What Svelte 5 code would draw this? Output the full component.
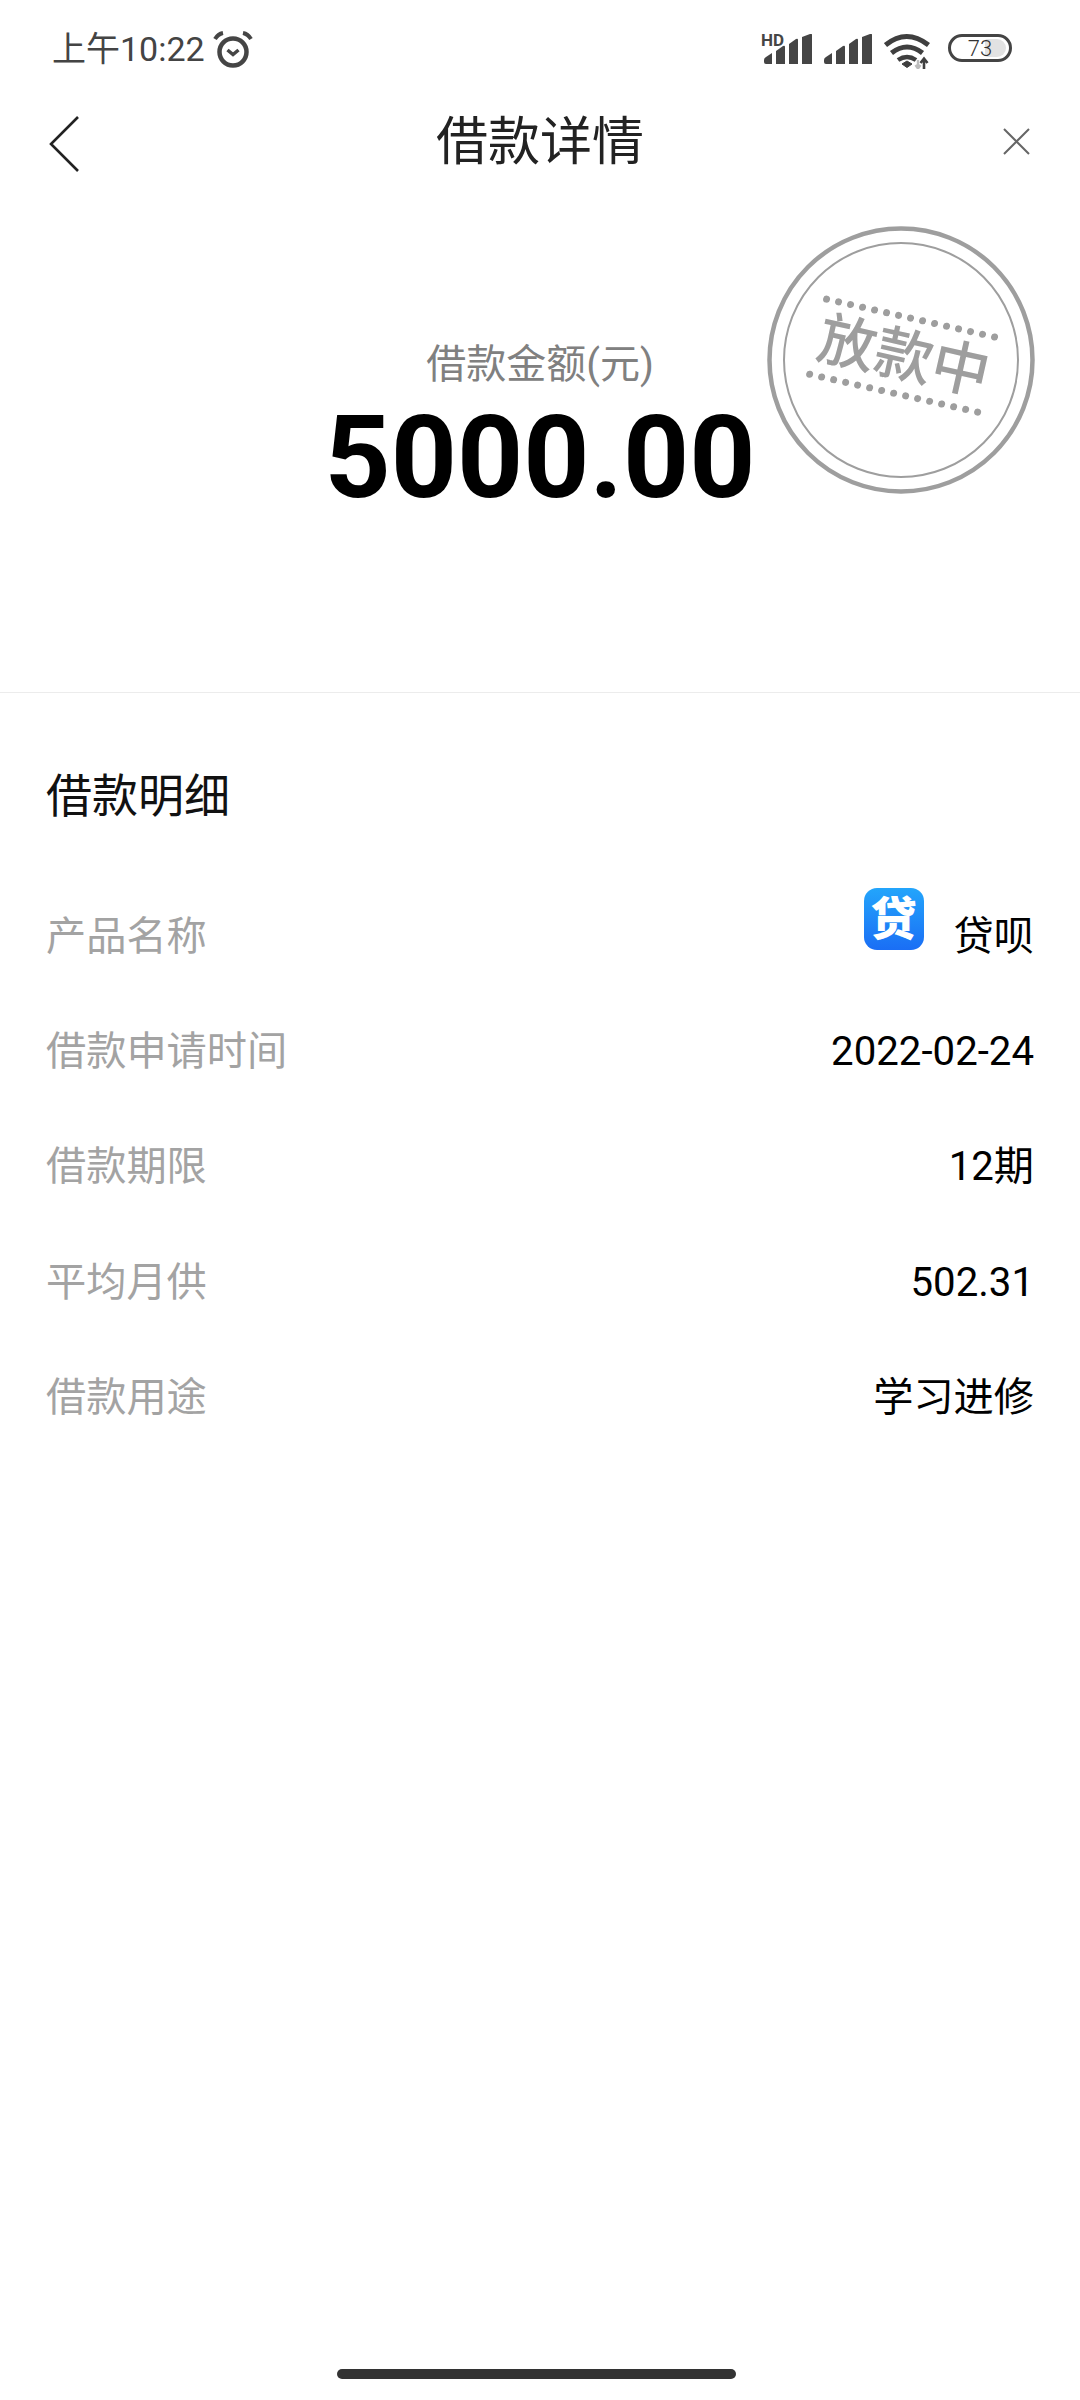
<script>
  const rows = [
    { label: '产品名称', value: '贷呗', logo: true },
    { label: '借款申请时间', value: '2022-02-24' },
    { label: '借款期限', value: '12期' },
    { label: '平均月供', value: '502.31' },
    { label: '借款用途', value: '学习进修' }
  ];
  const bars = [
    'M0 26q0-2 2-3l6-4v11H2q-2 0-2-2z',
    'M12 17l7-5q2-1 2 1v17h-9z',
    'M25 10l7-5q2-1 2 1v24h-9z',
    'M38 3l8-3q2-1 2 1v29h-10z'
  ];
</script>

<div class="page">
  <header class="status">
    <div class="time">
      <span>上午10:22</span>
      <svg width="40" height="38" viewBox="0 0 40 38" fill="none" stroke="#454545">
        <circle cx="20" cy="22" r="13.5" stroke-width="4.5" />
        <path d="M14.5 20l5.5 4.5 5.5-4.5" stroke-width="3.5" />
        <path d="M2 9q3-5 8-6M38 9q-3-5-8-6" stroke-width="4" />
      </svg>
    </div>
    <div class="icons">
      <div class="signal hd">
        <span>HD</span>
        <svg width="48" height="30" viewBox="0 0 48 30" fill="#454545">
          {#each bars as d}<path {d} />{/each}
        </svg>
      </div>
      <svg class="signal2" width="48" height="30" viewBox="0 0 48 30" fill="#454545">
        {#each bars as d}<path {d} />{/each}
      </svg>
      <svg class="wifi" width="46" height="36" viewBox="0 0 46 36" fill="none" stroke="#3f3f3f">
        <path d="M1.5 12q21-17 43 0" stroke-width="5" />
        <path d="M7.5 20q15.5-12 31 0" stroke-width="5" />
        <path d="M14 27q9-6 18 0" stroke-width="4.5" />
        <path d="M18 31l5-3 5 3-5 3.5z" fill="#3f3f3f" stroke-width="1" />
        <path d="M40 26v10M36.5 30l3.5-4.5 3.5 4.5" stroke-width="2.6" />
        <path d="M34 27v8M31.5 32l2.5 3.5 2.5-3.5" stroke="#bdbdbd" stroke-width="2.4" />
      </svg>
      <div class="battery"><i></i><span>73</span></div>
    </div>
  </header>

  <nav class="nav">
    <svg class="back" width="34" height="58" viewBox="0 0 34 58" fill="none" stroke="#222" stroke-width="2.6">
      <path d="M31 2L4 29l27 27" />
    </svg>
    <h1>借款详情</h1>
    <svg class="close" width="30" height="30" viewBox="0 0 30 30" fill="none" stroke="#666" stroke-width="2">
      <path d="M3 3l25 25M28 3L3 28" />
    </svg>
  </nav>

  <section class="hero">
    <p class="caption">借款金额(元)</p>
    <p class="amount">5000.00</p>
    <svg class="stamp" width="272" height="272" viewBox="0 0 272 272" fill="none" stroke="#9e9e9e">
      <circle cx="136" cy="136" r="131.5" stroke-width="4.5" />
      <circle cx="136" cy="136" r="117" stroke-width="2" />
      <g transform="rotate(12.7 136 136)">
        <path d="M50 93H223" stroke-width="7" stroke-linecap="round" stroke-dasharray="0 12.3" />
        <path d="M50 170H223" stroke-width="7" stroke-linecap="round" stroke-dasharray="0 12.3" />
        <text x="138" y="152" text-anchor="middle" class="stamp-text">放款中</text>
      </g>
    </svg>
  </section>

  <section class="detail">
    <h2>借款明细</h2>
    {#each rows as row}
      <div class="row">
        <span class="label">{row.label}</span>
        <span class="value">
          {#if row.logo}
            <span class="logo">贷</span>
          {/if}
          {row.value}
        </span>
      </div>
    {/each}
  </section>

  <div class="home-bar"></div>
</div>

<style>
  :global(body) {
    margin: 0;
    background: #fff;
  }

  .page {
    width: 1080px;
    height: 2400px;
    display: flex;
    flex-direction: column;
    position: relative;
    overflow: hidden;
    font-family: Roboto, 'Noto Sans CJK SC', sans-serif;
  }

  .status {
    height: 96px;
    box-sizing: border-box;
    padding: 25px 68px 0 52px;
    display: flex;
    justify-content: space-between;
    align-items: flex-start;
  }

  .time {
    display: flex;
    align-items: center;
    gap: 8px;
    font-size: 34px;
    line-height: 48px;
    color: #444;
  }

  .icons {
    display: flex;
    align-items: flex-start;
    gap: 12px;
    padding-top: 9px;
  }

  .signal {
    position: relative;
    height: 30px;
  }

  .signal svg, .signal2 {
    display: block;
  }

  .hd span {
    position: absolute;
    left: -3px;
    top: -2px;
    font-size: 17px;
    line-height: 17px;
    font-weight: 700;
    color: #454545;
  }

  .wifi {
    margin-top: -1px;
  }

  .battery {
    position: relative;
    width: 64px;
    height: 28px;
    box-sizing: border-box;
    margin-left: 6px;
    border: 3px solid #444;
    border-radius: 14px;
    overflow: hidden;
    display: flex;
    align-items: center;
    justify-content: center;
    font-size: 22px;
    font-weight: 300;
    color: #333;
  }

  .battery i {
    position: absolute;
    inset: 2px 3px 2px 34px;
    background: #e2e2e2;
    border-radius: 2px 10px 10px 2px;
  }

  .battery span {
    position: relative;
  }

  .nav {
    height: 90px;
    padding: 0 49px 0 47px;
    display: flex;
    align-items: center;
    justify-content: space-between;
    position: relative;
  }

  .back {
    margin-top: 6px;
  }

  .nav h1 {
    margin: 0;
    position: absolute;
    left: 0;
    right: 0;
    top: 16px;
    text-align: center;
    font-size: 52px;
    line-height: 62px;
    font-weight: 400;
    color: #222;
  }

  .hero {
    height: 507px;
    box-sizing: border-box;
    padding-top: 154px;
    border-bottom: 1px solid #ececec;
    position: relative;
    text-align: center;
  }

  .caption {
    margin: 0;
    font-size: 40px;
    line-height: 50px;
    color: #808080;
  }

  .amount {
    margin: 0;
    font-size: 115.5px;
    line-height: 136px;
    font-weight: 700;
    color: #000;
  }

  .stamp {
    position: absolute;
    left: 765px;
    top: 38px;
  }

  .stamp-text {
    font-family: 'Noto Sans CJK SC', sans-serif;
    font-size: 58px;
    font-weight: 500;
    fill: #9e9e9e;
    stroke: none;
  }

  .detail {
    padding: 73px 46px 0;
  }

  .detail h2 {
    margin: 0 0 49px;
    font-size: 46px;
    line-height: 60px;
    font-weight: 400;
    color: #111;
  }

  .row {
    height: 115.3px;
    box-sizing: border-box;
    padding-top: 8px;
    display: flex;
    align-items: center;
    justify-content: space-between;
    font-size: 40.2px;
    line-height: 56px;
  }

  .label {
    color: #a3a3a3;
  }

  .value {
    display: flex;
    align-items: center;
    color: #000;
  }

  .logo {
    width: 60px;
    height: 62px;
    margin: -35px 30px 0 0;
    border-radius: 13px;
    background: linear-gradient(#23a5fb, #1a6ef5);
    color: #fff;
    display: flex;
    align-items: center;
    justify-content: center;
    font-size: 46px;
    font-weight: 900;
    line-height: 62px;
  }

  .home-bar {
    position: absolute;
    left: 337px;
    top: 2369px;
    width: 399px;
    height: 10px;
    border-radius: 5px;
    background: #333;
  }
</style>
